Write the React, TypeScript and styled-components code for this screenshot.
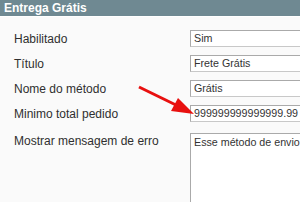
import React from 'react';
import styled, { createGlobalStyle } from 'styled-components';

const GlobalStyle = createGlobalStyle`
    html, body {
        margin: 0;
        padding: 0;
        background: #fafafa;
        overflow: hidden;
    }
`;

const Wrapper = styled.div`
    position: relative;
    width: 300px;
    height: 202px;
    overflow: hidden;
    background: #fafafa;
    font-family: 'Liberation Sans', Arial, sans-serif;
    font-size: 12px;
    color: #2f2f2f;
`;

const Head = styled.div`
    height: 16px;
    line-height: 16px;
    padding: 0 4px;
    background: #6f8992;
    border-bottom: 1px solid #fff;
    color: #fff;
    font-weight: bold;
    font-size: 12px;
`;

const Form = styled.div`
    display: grid;
    grid-template-columns: 176px 1fr;
    row-gap: 8px;
    padding: 13px 0 0 14px;
`;

const Label = styled.div<{ $top?: boolean }>`
    display: flex;
    align-items: ${p => (p.$top ? 'flex-start' : 'center')};
    padding-top: ${p => (p.$top ? '4px' : '0')};
    height: ${p => (p.$top ? 'auto' : '17px')};
    white-space: nowrap;
`;

const Input = styled.div`
    box-sizing: border-box;
    width: 280px;
    height: 17px;
    line-height: 15px;
    padding: 0 3px;
    background: #fff;
    border: 1px solid #aaa;
    border-color: #aaa #c8c8c8 #c8c8c8 #aaa;
    font-size: 10.7px;
    color: #333;
    white-space: nowrap;
    overflow: hidden;
`;

const TextArea = styled(Input)`
    height: 100px;
    margin-top: 3px;
    padding-top: 1px;
`;

const Arrow = styled.svg`
    position: absolute;
    left: 0;
    top: 0;
    pointer-events: none;
`;

const rows = [
    ['Habilitado', 'Sim'],
    ['Título', 'Frete Grátis'],
    ['Nome do método', 'Grátis'],
    ['Minimo total pedido', '999999999999999.99'],
];

export default function App() {
    return (
        <Wrapper>
            <GlobalStyle />
            <Head>Entrega Grátis</Head>
            <Form>
                {rows.map(([label, value]) => (
                    <React.Fragment key={label}>
                        <Label>{label}</Label>
                        <Input>{value}</Input>
                    </React.Fragment>
                ))}
                <Label $top>Mostrar mensagem de erro</Label>
                <TextArea>Esse método de envio</TextArea>
            </Form>
            <Arrow width="300" height="202" viewBox="0 0 300 202">
                <line x1="139" y1="87" x2="178" y2="106" stroke="#e8100f" strokeWidth="3" />
                <polygon points="194,114 171,111 178,98" fill="#e8100f" />
            </Arrow>
        </Wrapper>
    );
}
